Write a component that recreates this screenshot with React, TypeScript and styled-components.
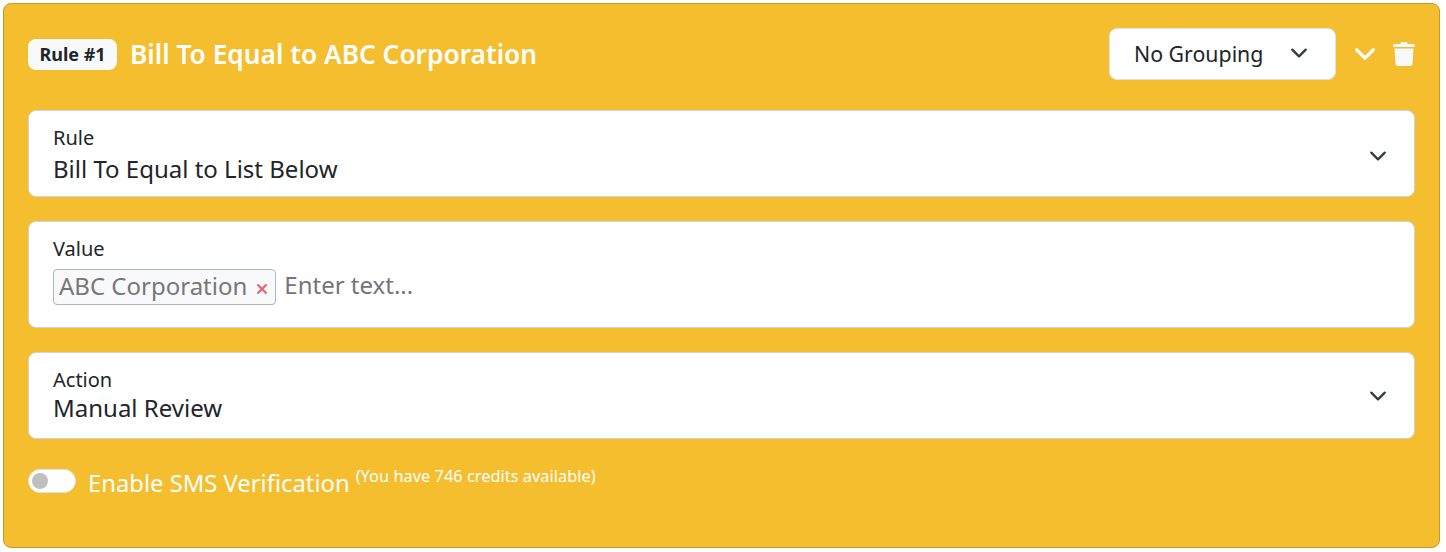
import * as React from "react";
import styled, { createGlobalStyle } from "styled-components";

const GlobalStyle = createGlobalStyle`
  html, body {
    margin: 0;
    padding: 0;
    background: #fff;
    font-family: "Noto Sans", "Open Sans", sans-serif;
  }
`;

const Page = styled.div`
  padding: 3px 6px 4px 3px;
`;
const Card = styled.div`
  box-sizing: border-box;
  height: 545px;
  padding: 24px 24px 0 24px;
  background: #f4be2e;
  border: 1px solid #c49a2c;
  border-radius: 8px;
`;
const Header = styled.div`
  display: flex;
  align-items: center;
  height: 52px;
  margin-bottom: 30px;
`;
const Badge = styled.span`
  display: flex;
  align-items: center;
  justify-content: center;
  width: 89px;
  height: 31px;
  margin-right: 13px;
  background: #f8f9fa;
  border-radius: 8px;
  color: #212529;
  font-size: 18px;
  font-weight: 700;
`;
const Title = styled.h1`
  flex: 1;
  margin: 0;
  color: #fff;
  font-size: 26.3px;
  font-weight: 600;
  line-height: 32px;
`;
const GroupSelect = styled.div`
  box-sizing: border-box;
  display: flex;
  align-items: center;
  justify-content: space-between;
  width: 227px;
  height: 52px;
  padding: 0 27px 2px 24px;
  background: #fff;
  border: 1px solid #dee2e6;
  border-radius: 8px;
  color: #212529;
  font-size: 21.3px;
`;
const HeaderActions = styled.div`
  display: flex;
  align-items: center;
  gap: 17px;
  margin-left: 18px;
`;
const Field = styled.div<{ $height: number }>`
  box-sizing: border-box;
  display: flex;
  align-items: flex-start;
  justify-content: space-between;
  height: ${(p) => p.$height}px;
  margin-bottom: 24px;
  padding: 14px 27px 0 24px;
  background: #fff;
  border: 1px solid #ced4da;
  border-radius: 8px;
  color: #212529;
`;
const FieldBody = styled.div`
  display: flex;
  flex-direction: column;
`;
const Label = styled.label`
  font-size: 20px;
  line-height: 26px;
`;
const FieldValue = styled.div<{ $gap: number }>`
  font-size: 24px;
  line-height: 30px;
  margin-top: ${(p) => p.$gap}px;
`;
const ChevronSlot = styled.div<{ $shift: number }>`
  align-self: center;
  display: flex;
  margin-top: ${(p) => p.$shift}px;
`;
const TagRow = styled.div`
  display: flex;
  align-items: flex-start;
  gap: 7px;
  margin-top: 7px;
`;
const Tag = styled.span`
  box-sizing: border-box;
  display: flex;
  align-items: center;
  height: 36px;
  padding: 0 7px 4px 5px;
  background: #f8f9fa;
  border: 1px solid #adb5bd;
  border-radius: 4px;
  color: #777;
  font-size: 24px;
`;
const TagRemove = styled.span`
  display: flex;
  margin: 8px 0 0 9px;
`;
const Placeholder = styled.span`
  margin-top: -1px;
  margin-left: 1px;
  color: #757575;
  font-size: 24px;
`;
const ToggleRow = styled.div`
  display: flex;
  align-items: flex-start;
  margin-top: 30px;
  color: #fff;
`;
const Toggle = styled.span`
  box-sizing: border-box;
  display: flex;
  align-items: center;
  width: 48px;
  height: 24px;
  padding: 0 3px;
  background: #fff;
  border: 1px solid #dee2e6;
  border-radius: 12px;
  &::before {
    content: "";
    width: 16px;
    height: 16px;
    border-radius: 50%;
    background: #bfbfbf;
  }
`;
const ToggleLabel = styled.span`
  margin-left: 12px;
  font-size: 23.8px;
  line-height: 28px;
`;
const Note = styled.span`
  margin-left: 6px;
  font-size: 16.4px;
  line-height: 14px;
`;

const Chevron = ({ color, size, stroke }: { color: string; size: number; stroke: number }) => (
  <svg width={size} height={size} viewBox="0 0 16 16" fill="none">
    <path d="M2 5l6 6 6-6" stroke={color} strokeWidth={stroke} strokeLinecap="round" strokeLinejoin="round" />
  </svg>
);

const Trash = () => (
  <svg width="22" height="24" viewBox="0 0 22 24" fill="#f8f9fa">
    <path d="M7.6 1.2C7.8.5 8.4 0 9.2 0h3.6c.8 0 1.4.5 1.6 1.2l.3.8h5.8c.8 0 1.5.7 1.5 1.5S21.300 5 20.500 5h-19C.7 5 0 4.300 0 3.500S.7 2 1.500 2h5.800z" />
    <path d="M1.500 6.500h19l-1 15.300c-.1 1.200-1.100 2.200-2.300 2.200H4.800c-1.200 0-2.200-1-2.300-2.200z" />
  </svg>
);

export default function App() {
  return (
    <Page>
      <GlobalStyle />
      <Card>
        <Header>
          <Badge>Rule #1</Badge>
          <Title>Bill To Equal to ABC Corporation</Title>
          <GroupSelect>
            No Grouping
            <Chevron color="#343a40" size={18} stroke={2} />
          </GroupSelect>
          <HeaderActions>
            <Chevron color="#fff" size={22} stroke={2.5} />
            <Trash />
          </HeaderActions>
        </Header>
        <Field $height={87}>
          <FieldBody>
            <Label>Rule</Label>
            <FieldValue $gap={3}>Bill To Equal to List Below</FieldValue>
          </FieldBody>
          <ChevronSlot $shift={-10}>
            <Chevron color="#343a40" size={18} stroke={2} />
          </ChevronSlot>
        </Field>
        <Field $height={107}>
          <FieldBody>
            <Label>Value</Label>
            <TagRow>
              <Tag>
                ABC Corporation
                <TagRemove>
                  <svg width="12" height="12" viewBox="0 0 12 12">
                    <path d="M1.500 1.500l9 9M10.500 1.500l-9 9" stroke="#e8636b" strokeWidth="2.2" />
                  </svg>
                </TagRemove>
              </Tag>
              <Placeholder>Enter text...</Placeholder>
            </TagRow>
          </FieldBody>
        </Field>
        <Field $height={87}>
          <FieldBody>
            <Label>Action</Label>
            <FieldValue $gap={0}>Manual Review</FieldValue>
          </FieldBody>
          <ChevronSlot $shift={-14}>
            <Chevron color="#343a40" size={18} stroke={2} />
          </ChevronSlot>
        </Field>
        <ToggleRow>
          <Toggle />
          <ToggleLabel>Enable SMS Verification</ToggleLabel>
          <Note>(You have 746 credits available)</Note>
        </ToggleRow>
      </Card>
    </Page>
  );
}
